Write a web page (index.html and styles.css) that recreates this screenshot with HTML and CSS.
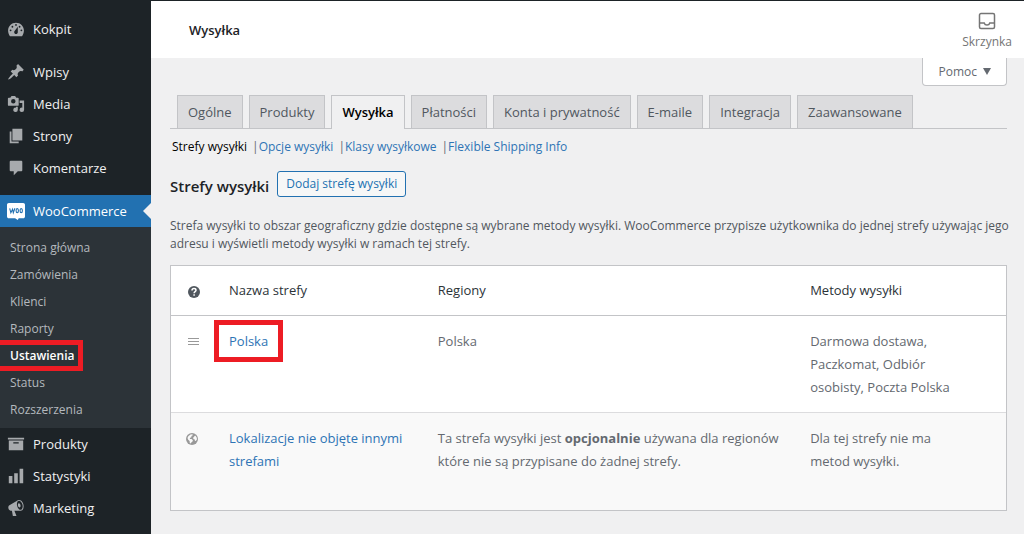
FILE: index.html
```html
<!DOCTYPE html>
<html lang="pl">
<head>
<meta charset="utf-8">
<meta name="viewport" content="width=device-width, initial-scale=1">
<title>Wysyłka</title>
<link rel="stylesheet" href="styles.css">
</head>
<body>
<div class="admin">
  <nav class="sidebar" aria-label="Menu główne">
    <ul class="menu">
      <li><a class="menu-link" href="#"><svg class="icon" viewBox="0 0 20 20"><path fill-rule="evenodd" d="M3.300 18h13.400c1.300-1.500 2.100-3.900 2.100-6.200 0-4.900-3.900-8.800-8.800-8.800s-8.800 3.900-8.800 8.800c0 2.300.8 4.700 2.100 6.200zM10 4.500a1 1 0 1 1 0 2 1 1 0 0 1 0-2zM6 6.500a1 1 0 1 1 0 2 1 1 0 0 1 0-2zm8 0a1 1 0 1 1 0 2 1 1 0 0 1 0-2zm-5.370 5.550L12 7.500v6c0 1.100-.9 2-2 2s-2-.9-2-2c0-.57.24-1.080.63-1.450zM4 10.500a1 1 0 1 1 0 2 1 1 0 0 1 0-2zm12 0a1 1 0 1 1 0 2 1 1 0 0 1 0-2z"/></svg>Kokpit</a></li>
    </ul>
    <ul class="menu">
      <li><a class="menu-link" href="#"><svg class="icon" viewBox="0 0 20 20"><path d="M10.44 3.02l1.82-1.82 6.36 6.35-1.83 1.82c-1.05-.68-2.48-.57-3.41.36l-.75.75c-.92.93-1.04 2.35-.35 3.41l-1.83 1.82-2.41-2.41-2.8 2.79c-.42.42-3.38 2.71-3.8 2.29s1.86-3.39 2.28-3.81l2.79-2.79L4.1 9.36l1.83-1.82c1.05.69 2.48.57 3.4-.36l.75-.75c.93-.92 1.05-2.35.36-3.41z"/></svg>Wpisy</a></li>
      <li><a class="menu-link" href="#"><svg class="icon" viewBox="0 0 20 20"><path fill-rule="evenodd" d="M13 11V4c0-.55-.45-1-1-1h-1.67L9 1H5L3.67 3H2c-.55 0-1 .45-1 1v7c0 .55.45 1 1 1h10c.55 0 1-.45 1-1zM7 4.500a2.500 2.500 0 1 1 0 5 2.500 2.500 0 0 1 0-5zM14 6h5v10.500a2.500 2.500 0 1 1-2-2.450V9h-3V6zm-4 8.050V13h2v3.500a2.500 2.500 0 1 1-2-2.450z"/></svg>Media</a></li>
      <li><a class="menu-link" href="#"><svg class="icon" viewBox="0 0 20 20"><path d="M6 15V2h11v13H6zm-1 1h8v2H3V5h2v11z"/></svg>Strony</a></li>
      <li><a class="menu-link" href="#"><svg class="icon" viewBox="0 0 20 20"><path d="M4 2h12c.6 0 1 .4 1 1v9.500c0 .6-.4 1-1 1h-4l-4.500 4.500v-4.500H4c-.6 0-1-.4-1-1V3c0-.6.4-1 1-1z"/></svg>Komentarze</a></li>
    </ul>
    <ul class="menu">
      <li>
        <a class="menu-link menu-link-current" href="#"><svg class="icon" viewBox="0 0 20 20"><path fill="#fff" d="M2 1h16c1.100 0 2 .9 2 2v13c0 1.100-.9 2-2 2h-5l-1 2-3-2H2c-1.100 0-2-.9-2-2V3c0-1.100.9-2 2-2z"/><path class="woo-line" d="M3 7l1.300 5 1.900-4 .8 4L8.800 7"/><ellipse class="woo-line" cx="11.400" cy="9.600" rx="1.300" ry="2.200"/><ellipse class="woo-line" cx="15.800" cy="9.600" rx="1.300" ry="2.200"/></svg>WooCommerce</a>
        <ul class="submenu">
          <li><a href="#">Strona główna</a></li>
          <li><a href="#">Zamówienia</a></li>
          <li><a href="#">Klienci</a></li>
          <li><a href="#">Raporty</a></li>
          <li><a class="submenu-current marked" href="#">Ustawienia</a></li>
          <li><a href="#">Status</a></li>
          <li><a href="#">Rozszerzenia</a></li>
        </ul>
      </li>
      <li><a class="menu-link" href="#"><svg class="icon" viewBox="0 0 20 20"><path fill-rule="evenodd" d="M19 3v2H1V3h18zM2 6h16v11H2V6zm11 3.500V8H7v1.500h6z"/></svg>Produkty</a></li>
      <li><a class="menu-link" href="#"><svg class="icon" viewBox="0 0 20 20"><path d="M18 18V2h-4v16h4zm-6 0V7H8v11h4zm-6 0v-8H2v8h4z"/></svg>Statystyki</a></li>
      <li><a class="menu-link" href="#"><svg class="icon" viewBox="0 0 20 20"><path fill-rule="evenodd" d="M18.15 5.94c.46 1.62.38 3.22-.02 4.48-.42 1.28-1.26 2.18-2.3 2.48-.16.06-.26.06-.4.06-.06.02-.12.02-.18.02-.06.02-.14.02-.22.02h-6.8l2.22 5.5c.02.14-.06.26-.14.34-.08.1-.24.16-.34.16H6.95c-.1 0-.26-.06-.34-.16-.08-.08-.16-.2-.14-.34l-1-5.5H4.25l-.02-.02c-.5.06-1.08-.18-1.54-.62s-.88-1.08-1.06-1.88c-.24-.8-.2-1.56-.02-2.2.18-.62.58-1.08 1.06-1.3l.02-.02 9-5.4c.1-.06.18-.1.24-.16.06-.04.14-.08.24-.12.16-.08.28-.12.5-.18 1.04-.3 2.24.1 3.22.98s1.84 2.24 2.26 3.86zm-2.58 5.98h-.02c.4-.1.74-.34 1.04-.7.58-.7.86-1.76.86-3.04 0-.64-.1-1.3-.28-1.98-.34-1.36-1.02-2.5-1.78-3.24s-1.68-1.1-2.46-.88c-.82.22-1.4.96-1.7 2-.32 1.04-.28 2.36.06 3.72.38 1.36 1 2.5 1.8 3.24.78.74 1.62 1.1 2.48.88zm-2.54-7.08c.22-.04.42-.02.62.04.38.16.76.48 1.02 1s.42 1.2.42 1.78c0 .3-.04.56-.12.8-.18.48-.44.84-.86.94-.34.1-.8-.06-1.14-.4s-.64-.86-.78-1.5c-.18-.62-.12-1.24.02-1.72s.48-.84.82-.94z"/></svg>Marketing</a></li>
    </ul>
  </nav>

  <div class="page">
    <header class="header">
      <h1 class="header-title">Wysyłka</h1>
      <button class="inbox" type="button"><svg class="inbox-icon" viewBox="0 0 18 18"><path d="M3 1.500h12A1.500 1.500 0 0 1 16.500 3v12a1.500 1.500 0 0 1-1.500 1.500H3A1.500 1.500 0 0 1 1.500 15V3A1.500 1.500 0 0 1 3 1.500zM1.500 11h4.700c.4 1.400 1.400 2.100 2.800 2.100s2.400-.7 2.800-2.100h4.700"/></svg>Skrzynka</button>
    </header>

    <main class="content">
      <div class="help-row"><button class="help" type="button">Pomoc <span class="caret"></span></button></div>
      <nav class="tabs" aria-label="Ustawienia">
        <a class="tab" href="#">Ogólne</a>
        <a class="tab" href="#">Produkty</a>
        <a class="tab tab-active" href="#">Wysyłka</a>
        <a class="tab" href="#">Płatności</a>
        <a class="tab" href="#">Konta i prywatność</a>
        <a class="tab" href="#">E-maile</a>
        <a class="tab" href="#">Integracja</a>
        <a class="tab" href="#">Zaawansowane</a>
      </nav>
      <ul class="sections">
        <li><a class="section-current" href="#">Strefy wysyłki</a></li>
        <li><a href="#">Opcje wysyłki</a></li>
        <li><a href="#">Klasy wysyłkowe</a></li>
        <li><a href="#">Flexible Shipping Info</a></li>
      </ul>
      <div class="heading">
        <h2 class="heading-title">Strefy wysyłki</h2>
        <a class="add-button" href="#">Dodaj strefę wysyłki</a>
      </div>
      <p class="intro">Strefa wysyłki to obszar geograficzny gdzie dostępne są wybrane metody wysyłki. WooCommerce przypisze użytkownika do jednej strefy używając jego adresu i wyświetli metody wysyłki w ramach tej strefy.</p>
      <table class="zones">
        <colgroup><col class="col-sort"><col class="col-name"><col class="col-region"><col class="col-methods"></colgroup>
        <thead>
          <tr>
            <th class="cell-icon" scope="col"><svg class="small-icon" viewBox="0 0 14 14" role="img" aria-label="Pomoc"><circle cx="7" cy="7" r="6" fill="#50575e"/><path d="M5 5.500c0-1.200.9-1.900 2-1.900s2 .7 2 1.700c0 1.300-1.900 1.400-1.900 2.900M7.100 9.200v1.500" fill="none" stroke="#fff" stroke-width="1.500"/></svg></th>
            <th scope="col">Nazwa strefy</th><th scope="col">Regiony</th><th scope="col">Metody wysyłki</th>
          </tr>
        </thead>
        <tbody>
          <tr class="zone">
            <td class="cell-icon"><svg class="small-icon" viewBox="0 0 14 14"><path d="M1 2.500h11M1 5.500h11M1 8.500h11" stroke="#999" stroke-width="1"/></svg></td>
            <td><a class="marked" href="#">Polska</a></td><td>Polska</td><td class="cell-methods">Darmowa dostawa, Paczkomat, Odbiór osobisty, Poczta Polska</td>
          </tr>
        </tbody>
        <tfoot>
          <tr class="rest">
            <td class="cell-icon cell-globe"><svg class="small-icon" viewBox="0 0 14 14"><circle cx="7" cy="5" r="5" fill="none"/><circle cx="7" cy="6" r="6" fill="#999"/><path fill="#f9f9f9" d="M5.500 1.500l2-.3.300 1-1.300.8-.2 1.200-1.500.8.200.9 1.600.1 1.300 1.200-.4 1.400-1.200 1-.6 1-.9-.5-.2-2-1.400-1.400-.7-1.700.8-1.700zM9.300 3l1.200-.3 1.300 2 .1 1.700-1.100 1.700-.9-.4-.1-1.300-1.400-.5-.2-1.500 1.100-.7z"/></svg></td>
            <td><a href="#">Lokalizacje nie objęte innymi strefami</a></td><td>Ta strefa wysyłki jest <b>opcjonalnie</b> używana dla regionów które nie są przypisane do żadnej strefy.</td><td class="cell-methods">Dla tej strefy nie ma metod wysyłki.</td>
          </tr>
        </tfoot>
      </table>
    </main>
  </div>
</div>
</body>
</html>
```
FILE: styles.css
```css
* { box-sizing: border-box; }

body {
  margin: 0;
  background: #f0f0f1;
  color: #50575e;
  font: 12px/18px "Open Sans", "Noto Sans", sans-serif;
}

a { color: #2e74b5; text-decoration: none; }
ul { margin: 0; padding: 0; list-style: none; }
button { font: inherit; color: inherit; cursor: pointer; }

.admin {
  display: flex;
  min-height: 100vh;
  border-top: 1px solid #1d2327;
}

/* Sidebar */
.sidebar {
  display: flex;
  flex-direction: column;
  flex: none;
  gap: 11px;
  width: 151px;
  padding-top: 12px;
  background: #1d2327;
}

.menu-link {
  display: flex;
  align-items: center;
  gap: 8px;
  height: 32px;
  padding-left: 7px;
  color: #f0f0f1;
  font-size: 13px;
}

.icon { width: 18px; height: 18px; fill: #a7aaad; }
.woo-line { fill: none; stroke: #2271b1; stroke-width: 1.2; }

.menu-link-current {
  position: relative;
  background: #2271b1;
  color: #fff;
}

.menu-link-current::after {
  content: "";
  position: absolute;
  top: 8px;
  right: 0;
  border: 8px solid transparent;
  border-left-width: 0;
  border-right-color: #f0f0f1;
}

.submenu { padding: 7px 0 5px; background: #2c3338; }
.submenu a {
  display: block;
  padding-left: 10px;
  color: #b4b9be;
  line-height: 27px;
}
.submenu .submenu-current { color: #fff; font-weight: 600; }

/* Red highlight frames */
.marked { position: relative; }
.marked::after {
  content: "";
  position: absolute;
  inset: -12px -15px -12px -15px;
  border: 5px solid #ed1c24;
  pointer-events: none;
}
.submenu .marked::after { inset: -2px 68px -2px -5px; }

/* Header */
.page { flex: 1; min-width: 0; }
.header {
  display: flex;
  align-items: center;
  justify-content: space-between;
  height: 57px;
  padding: 0 12px 0 38px;
  background: #fff;
}
.header-title { margin: 0; color: #1d2327; font-size: 13px; font-weight: 600; }
.inbox {
  display: flex;
  flex-direction: column;
  align-items: center;
  gap: 3px;
  padding: 3px 0 0;
  border: 0;
  background: none;
  color: #757575;
}
.inbox-icon { width: 18px; height: 18px; fill: none; stroke: #757575; stroke-width: 1.5; }

.content { padding: 0 17px 22px 19px; }
.help-row { display: flex; justify-content: flex-end; }
.help {
  display: flex;
  align-items: center;
  gap: 6px;
  height: 28px;
  padding: 0 15px;
  border: 1px solid #c3c4c7;
  border-top: 0;
  border-radius: 0 0 4px 4px;
  background: #fff;
  color: #646970;
}
.caret { border: 4px solid transparent; border-top: 7px solid #646970; border-bottom: 0; }

/* Tabs */
.tabs {
  display: flex;
  gap: 6px;
  margin-top: 9px;
  padding-left: 7px;
  border-bottom: 1px solid #c3c4c7;
}
.tab {
  height: 33px;
  padding: 0 10px;
  border: 1px solid #c3c4c7;
  border-bottom: 0;
  background: #dcdcde;
  color: #50575e;
  font-size: 13px;
  font-weight: 500;
  line-height: 33px;
  white-space: nowrap;
}
.tab-active { height: 34px; margin-bottom: -1px; background: #f0f0f1; color: #000; font-weight: 600; }

.sections { display: flex; margin-top: 9px; padding-left: 2px; }
.sections li + li::before { content: "|"; margin-left: 5px; color: #646970; }
.sections .section-current { color: #000; font-weight: 500; }

.heading { display: flex; align-items: center; gap: 8px; margin-top: 15px; }
.heading-title { margin: 0; padding-top: 4px; color: #1d2327; font-size: 15px; font-weight: 600; }
.add-button {
  padding: 0 8px;
  border: 1px solid #2271b1;
  border-radius: 3px;
  background: #f6f7f7;
  color: #2271b1;
  font-weight: 500;
  line-height: 24px;
}
.intro { margin: 20px -8px 12px 0; }

/* Zones table */
.zones {
  width: 100%;
  border: 1px solid #c3c4c7;
  border-spacing: 0;
  background: #fff;
  table-layout: fixed;
}
.col-sort { width: 43px; }
.col-name { width: 25%; }
.col-region { width: 44.600%; }
.zones th, .zones td {
  padding: 13px 15px;
  font-size: 13px;
  line-height: 23px;
  text-align: left;
  vertical-align: top;
}
.zones th { border-bottom: 1px solid #c3c4c7; color: #2c3338; font-weight: 400; }
.zones td { padding-top: 14px; color: #646970; }
.zones .cell-methods { padding-right: 50px; }
.zones .cell-icon { padding-right: 0; padding-left: 16px; }
.zones .cell-globe { padding-left: 14px; }
.zones .rest td { height: 98px; border-top: 1px solid #dcdcde; background: #f9f9f9; }
.small-icon { display: block; width: 14px; height: 14px; margin-top: 6px; }
```
